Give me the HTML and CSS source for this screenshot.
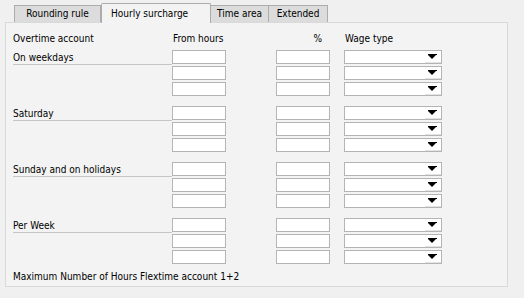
FILE: index.html
```html
<!DOCTYPE html>
<html lang="en">
<head>
  <meta charset="UTF-8">
  <title>Hourly surcharge</title>
  <link rel="stylesheet" href="styles.css">
</head>
<body>
  <div class="window">
    <div class="tabs">
      <div class="tab tab-rounding">Rounding rule</div>
      <div class="tab active">Hourly surcharge</div>
      <div class="tab tab-time">Time area</div>
      <div class="tab tab-extended">Extended</div>
    </div>
    <div class="panel">
      <div class="head">
        <span class="col-label">Overtime account</span>
        <span class="col-from">From hours</span>
        <span class="col-pct">%</span>
        <span class="col-wage">Wage type</span>
      </div>

      <div class="group">
        <div class="label">On weekdays</div>
        <input class="box from"><input class="box pct"><div class="combo"><span class="drop"></span></div>
        <input class="box from"><input class="box pct"><div class="combo"><span class="drop"></span></div>
        <input class="box from"><input class="box pct"><div class="combo"><span class="drop"></span></div>
      </div>

      <div class="group">
        <div class="label">Saturday</div>
        <input class="box from"><input class="box pct"><div class="combo"><span class="drop"></span></div>
        <input class="box from"><input class="box pct"><div class="combo"><span class="drop"></span></div>
        <input class="box from"><input class="box pct"><div class="combo"><span class="drop"></span></div>
      </div>

      <div class="group">
        <div class="label">Sunday and on holidays</div>
        <input class="box from"><input class="box pct"><div class="combo"><span class="drop"></span></div>
        <input class="box from"><input class="box pct"><div class="combo"><span class="drop"></span></div>
        <input class="box from"><input class="box pct"><div class="combo"><span class="drop"></span></div>
      </div>

      <div class="group">
        <div class="label">Per Week</div>
        <input class="box from"><input class="box pct"><div class="combo"><span class="drop"></span></div>
        <input class="box from"><input class="box pct"><div class="combo"><span class="drop"></span></div>
        <input class="box from"><input class="box pct"><div class="combo"><span class="drop"></span></div>
      </div>

      <div class="footer">Maximum Number of Hours Flextime account 1+2</div>
    </div>
  </div>
</body>
</html>
```

FILE: styles.css
```css
body {
  margin: 0;
  background-color: #f0f0f0;
  font-family: "DejaVu Sans Condensed", "DejaVu Sans", sans-serif;
  font-stretch: condensed;
  font-size: 10px;
  color: #000;
}

.window {
  padding: 3px 0 0 5px;
}

/* tab strip */
.tabs {
  display: flex;
  align-items: flex-end;
  height: 19px;
  margin-left: 9px;
}

.tab {
  box-sizing: border-box;
  height: 17px;
  line-height: 16px;
  text-align: center;
  background-color: #dcdcdc;
  border: 1px solid #acacac;
  border-bottom: none;
  border-left: none;
}

.tab-rounding {
  width: 87px;
  border-left: 1px solid #acacac;
}

.tab-time {
  width: 58px;
}

.tab-extended {
  width: 59px;
}

.tab.active {
  width: 110px;
  height: 20px;
  line-height: 20px;
  margin-bottom: -1px;
  text-align: left;
  padding-left: 9px;
  background-color: #f3f3f3;
  border-left: 1px solid #acacac;
  border-radius: 2px 2px 0 0;
}

/* page body */
.panel {
  box-sizing: border-box;
  width: 503px;
  height: 265px;
  padding: 8px 0 0 7px;
  background-color: #f3f3f3;
  border: 1px solid #d9d9d9;
}

.head {
  display: grid;
  grid-template-columns: 159px 104px 68px 98px;
  height: 16px;
  line-height: 15px;
  margin-bottom: 3px;
}

.col-from {
  padding-left: 1px;
}

.col-pct {
  width: 46px;
  text-align: right;
}

.col-wage {
  padding-left: 1px;
}

.group {
  display: grid;
  grid-template-columns: 159px 104px 68px 98px;
  grid-template-rows: repeat(3, 14px);
  row-gap: 2px;
}

.group + .group {
  margin-top: 10px;
}

.label {
  grid-column: 1;
  grid-row: 1;
  height: 14px;
  line-height: 15px;
  border-bottom: 1px solid #c6c6c6;
}

.box,
.combo {
  box-sizing: border-box;
  height: 14px;
  margin: 0;
  padding: 0;
  background-color: #fff;
  border: 1px solid #b4b4b4;
  outline: none;
}

.box.from {
  grid-column: 2;
  width: 54px;
}

.box.pct {
  grid-column: 3;
  width: 54px;
}

.combo {
  grid-column: 4;
  width: 98px;
  display: flex;
  justify-content: flex-end;
}

.drop {
  width: 16px;
  height: 12px;
  box-sizing: border-box;
  border-bottom: 1px solid #e4e4e4;
  position: relative;
}

.drop::after {
  content: "";
  position: absolute;
  left: 3px;
  top: 4px;
  border-left: 4px solid transparent;
  border-right: 4px solid transparent;
  border-top: 4px solid #000;
}

.drop::before {
  content: "";
  position: absolute;
  left: 3px;
  top: 3px;
  width: 9px;
  height: 1px;
  background-color: #000;
}

.footer {
  margin-top: 6px;
  line-height: 14px;
}
```
